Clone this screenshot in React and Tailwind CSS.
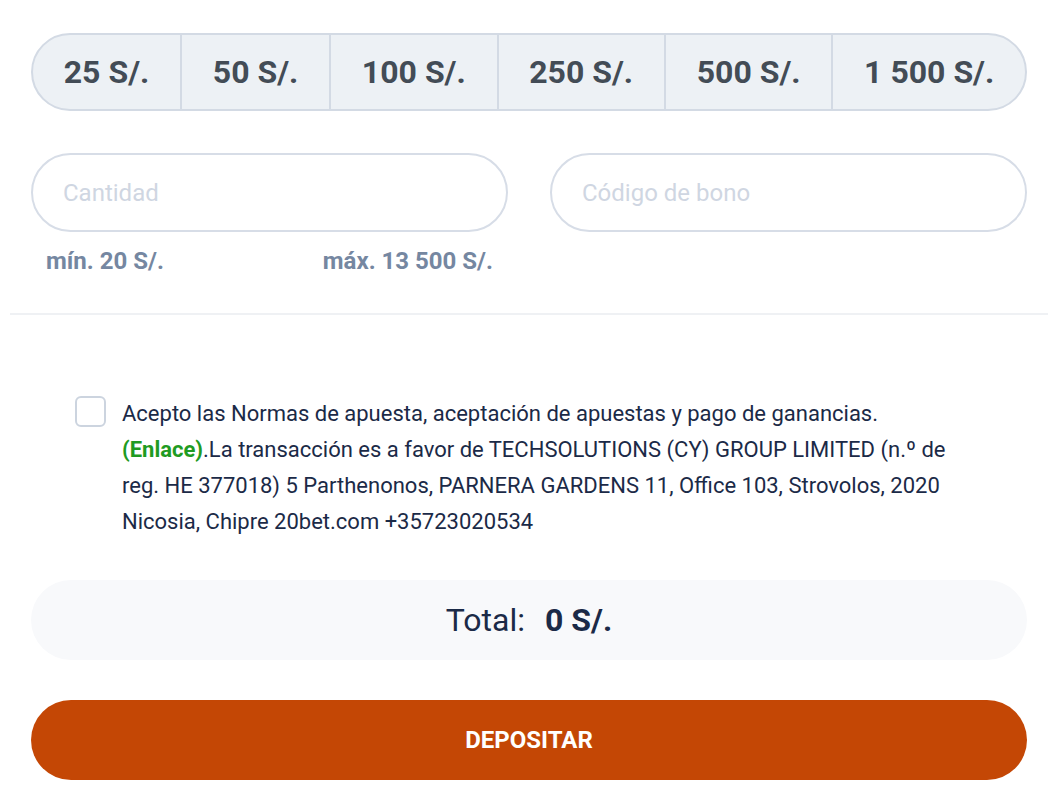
import React, { useState } from 'react'

const presets = ['25 S/.', '50 S/.', '100 S/.', '250 S/.', '500 S/.', '1 500 S/.']

export default function App() {
  const [amount, setAmount] = useState('')
  const [bonus, setBonus] = useState('')
  const [accepted, setAccepted] = useState(false)

  return (
    <div className="w-[1058px] min-h-[806px] bg-white pt-[33px] font-['Roboto',sans-serif]">
      <div className="px-[31px]">
        {/* Preset amounts */}
        <div className="flex h-[78px] rounded-full border-2 border-[#d3dae4] bg-[#edf1f5] overflow-hidden">
          {presets.map((p, i) => (
            <button
              key={p}
              onClick={() => setAmount(p.replace(/[^0-9]/g, ''))}
              className={`flex-auto flex items-center justify-center px-1 text-[32px] font-bold text-[#434c56] ${
                i > 0 ? 'border-l-2 border-[#d3dae4]' : ''
              }`}
            >
              {p}
            </button>
          ))}
        </div>

        {/* Inputs */}
        <div className="grid grid-cols-2 gap-[42px] mt-[42px]">
          <div>
            <input
              value={amount}
              onChange={(e) => setAmount(e.target.value)}
              placeholder="Cantidad"
              className="w-full h-[79px] rounded-full border-2 border-[#d7dde7] px-[30px] text-[24px] text-[#1b2a47] placeholder:text-[#cfd6e2] outline-none"
            />
            <div className="flex justify-between px-[15px] mt-[13px] text-[24px] leading-[32px] font-bold text-[#7587a1]">
              <span>mín. 20 S/.</span>
              <span>máx. 13 500 S/.</span>
            </div>
          </div>
          <div>
            <input
              value={bonus}
              onChange={(e) => setBonus(e.target.value)}
              placeholder="Código de bono"
              className="w-full h-[79px] rounded-full border-2 border-[#d7dde7] px-[30px] text-[24px] text-[#1b2a47] placeholder:text-[#cfd6e2] outline-none"
            />
          </div>
        </div>
      </div>

      {/* Divider */}
      <div className="mx-[10px] mt-[36px] h-[2px] bg-[#eff1f4]" />

      {/* Terms */}
      <div className="flex gap-[16px] pl-[75px] pr-[90px] mt-[83px]">
        <button
          onClick={() => setAccepted(!accepted)}
          className="flex-shrink-0 w-[31px] h-[31px] mt-[-2px] rounded-[6px] border-2 border-[#ccd4df] bg-white"
        />
        <p className="text-[22px] leading-[36px] text-[#1b2a47] mt-[-2px]">
          Acepto las Normas de apuesta, aceptación de apuestas y pago de ganancias.{' '}
          <span className="font-bold text-[#1f9b22]">(Enlace)</span>.La transacción es a favor de TECHSOLUTIONS (CY) GROUP LIMITED (n.º de reg. HE 377018) 5 Parthenonos, PARNERA GARDENS 11, Office 103, Strovolos, 2020 Nicosia, Chipre 20bet.com +35723020534
        </p>
      </div>

      <div className="px-[31px]">
        {/* Total */}
        <div className="flex items-center justify-center gap-[20px] h-[80px] mt-[40px] rounded-full bg-[#f8f9fb] text-[32px] text-[#1b2a47]">
          <span>Total:</span>
          <span className="font-bold">0 S/.</span>
        </div>

        {/* Submit */}
        <button className="w-full h-[80px] mt-[40px] rounded-full bg-[#c44705] text-white text-[24px] font-bold uppercase">
          Depositar
        </button>
      </div>
    </div>
  )
}
